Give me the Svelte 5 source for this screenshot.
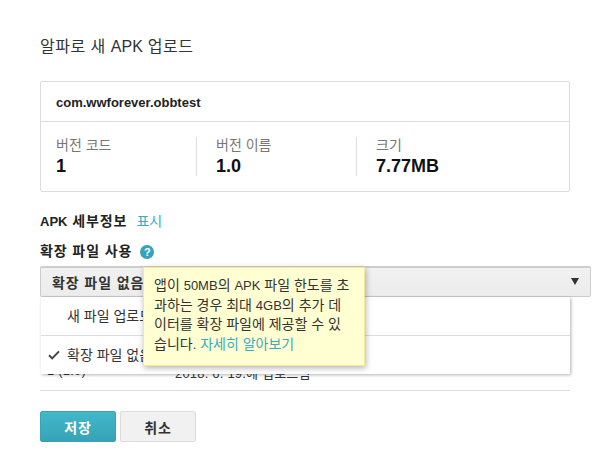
<script>
  const stats = [
    { label: "버전 코드", value: "1" },
    { label: "버전 이름", value: "1.0" },
    { label: "크기", value: "7.77MB" },
  ];
</script>

<div class="page">
  <h2 class="title">알파로 새 <span class="la">APK</span> 업로드</h2>

  <div class="card">
    <div class="card-head">com.wwforever.obbtest</div>
    <div class="stats">
      {#each stats as s}
        <div class="stat">
          <div class="stat-label">{s.label}</div>
          <div class="stat-value">{s.value}</div>
        </div>
      {/each}
    </div>
  </div>

  <div class="details"><b><span class="la">APK</span> 세부정보</b><a href="#show">표시</a></div>

  <div class="ext-label">
    <b>확장 파일 사용</b>
    <span class="help">?</span>
  </div>

  <div class="select-wrap">
    <div class="select">
      <b>확장 파일 없음</b>
      <span class="arrow"></span>
    </div>

    <div class="under">
      <span class="under-ver">1 (1.0)</span>
      <span>2018. 6. 19.에 업로드됨</span>
    </div>

    <div class="menu">
      <div class="menu-item">새 파일 업로드</div>
      <div class="menu-item">
        <svg class="check" viewBox="0 0 12 10" width="12" height="10">
          <path d="M1 5.2 L4.2 8.4 L11 1.4" fill="none" stroke="#444" stroke-width="2" />
        </svg>
        확장 파일 없음
      </div>
    </div>

    <div class="tip">
      앱이 <span class="la">50MB</span>의 <span class="la">APK</span> 파일 한도를 초<br />과하는 경우 최대 <span class="la">4GB</span>의 추가 데<br />이터를 확장 파일에 제공할 수 있<br />습니다<span class="la">.</span> <a href="#more">자세히 알아보기</a>
    </div>
  </div>

  <hr />

  <div class="actions">
    <button class="btn primary">저장</button>
    <button class="btn">취소</button>
  </div>
</div>

<style>
  :global(body) {
    background: #fff;
  }

  .page {
    width: 530px;
    padding: 37px 39px 0 40px;
    font-family: "Liberation Sans", "Noto Sans CJK KR", sans-serif;
    font-size: 14px;
    color: #333;
  }

  .la {
    font-size: 13px;
    letter-spacing: 0;
  }

  .title .la {
    font-size: 16px;
  }

  b {
    letter-spacing: 0.9px;
  }

  .title {
    margin: 0 0 25px;
    font-size: 16px;
    line-height: 19px;
    font-weight: 400;
    letter-spacing: 0.5px;
    color: #333;
  }

  .card {
    border: 1px solid #ddd;
    border-radius: 2px;
    box-sizing: border-box;
    height: 111px;
  }

  .card-head {
    height: 39px;
    line-height: 41px;
    padding-left: 15px;
    border-bottom: 1px solid #ddd;
    font-size: 13px;
    font-weight: 700;
    color: #222;
  }

  .stats {
    display: flex;
    padding: 15px 0 0 15px;
  }

  .stat {
    width: 140px;
    height: 39px;
    border-right: 1px solid #ddd;
  }

  .stat + .stat {
    padding-left: 19px;
  }

  .stat:last-child {
    border-right: 0;
  }

  .stat-label {
    line-height: 17px;
    color: #777;
  }

  .stat-value {
    font-size: 18px;
    line-height: 24px;
    font-weight: 700;
    color: #111;
  }

  .details {
    margin-top: 21px;
    line-height: 17px;
    color: #222;
  }

  .details a {
    margin-left: 9px;
    color: #36acc4;
    text-decoration: none;
  }

  .ext-label {
    display: flex;
    align-items: center;
    gap: 8px;
    margin-top: 13px;
    line-height: 17px;
    color: #222;
  }

  .help {
    width: 14px;
    height: 14px;
    border-radius: 50%;
    background: #37a3b8;
    color: #fff;
    font-size: 11px;
    line-height: 14px;
    font-weight: 700;
    text-align: center;
  }

  .select-wrap {
    position: relative;
    margin-top: 6px;
    height: 116px;
  }

  .select {
    display: flex;
    align-items: center;
    justify-content: space-between;
    box-sizing: border-box;
    width: 551px;
    height: 31px;
    padding: 0 11px 1px 11px;
    background: linear-gradient(#f1f1f1, #ececec);
    border: 1px solid #ccc;
    border-top-width: 2px;
    border-radius: 2px;
    color: #333;
  }

  .arrow {
    width: 0;
    height: 0;
    border-left: 4px solid transparent;
    border-right: 4px solid transparent;
    border-top: 7px solid #333;
  }

  .under {
    display: flex;
    padding: 66px 0 0 7px;
    font-size: 13px;
    letter-spacing: 0.2px;
    color: #333;
  }

  .under-ver {
    width: 128px;
  }

  .menu {
    position: absolute;
    top: 31px;
    left: 1px;
    width: 529px;
    box-sizing: border-box;
    background: #fff;
    box-shadow: 1px 1px 3px rgba(0, 0, 0, 0.3);
  }

  .menu-item {
    position: relative;
    height: 38px;
    line-height: 38px;
    padding-left: 26px;
    color: #333;
  }

  .menu-item + .menu-item {
    border-top: 1px solid #ddd;
  }

  .check {
    position: absolute;
    left: 7px;
    top: 14px;
  }

  .tip {
    position: absolute;
    top: 1px;
    left: 103px;
    width: 222px;
    box-sizing: border-box;
    height: 99px;
    padding: 8px 10px;
    background: #ffffd2;
    border: 1px solid #f5e89a;
    box-shadow: 1px 2px 6px rgba(0, 0, 0, 0.3);
    line-height: 19.6px;
    white-space: nowrap;
    color: #333;
  }

  .tip a {
    color: #36acc4;
    text-decoration: none;
  }

  hr {
    margin: 8px 0 0;
    border: 0;
    border-top: 1px solid #ddd;
  }

  .actions {
    display: flex;
    gap: 4px;
    margin-top: 20px;
  }

  .btn {
    width: 76px;
    height: 31px;
    padding: 0;
    box-sizing: border-box;
    border: 1px solid #ddd;
    border-radius: 2px;
    background: #f1f1f1;
    font: 700 14px "Liberation Sans", "Noto Sans CJK KR", sans-serif;
    letter-spacing: 0.9px;
    color: #333;
  }

  .primary {
    border-color: #38a3b6;
    background: linear-gradient(#42b8cb, #37a2b5);
    color: #fff;
  }
</style>
